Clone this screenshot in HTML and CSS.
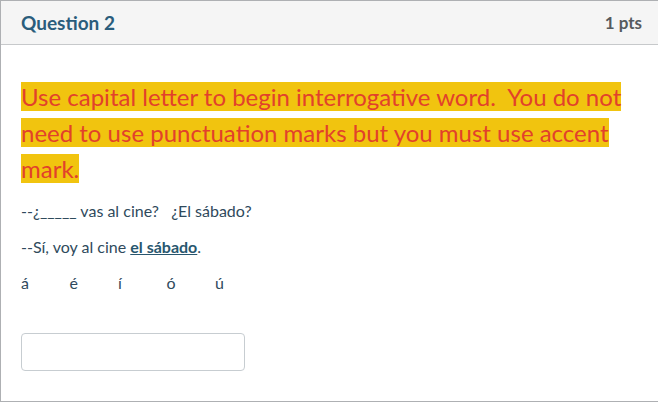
FILE: index.html
```html
<!DOCTYPE html>
<html>
<head>
<meta charset="utf-8">
<link rel="stylesheet" href="styles.css">
</head>
<body>
<div class="question">
  <div class="header">
    <span class="title">Question 2</span>
    <span class="pts">1 pts</span>
  </div>
  <div class="content">
    <p class="instr"><span class="hl">Use capital letter to begin interrogative word.&nbsp; You do not need to use punctuation marks but you must use accent mark.</span></p>
    <p class="line">--¿_____ vas al cine?&nbsp;&nbsp; ¿El sábado?</p>
    <p class="line">--Sí, voy al cine <strong class="u">el sábado</strong>.</p>
    <p class="line accents"><span>á</span><span>é</span><span>í</span><span>ó</span><span>ú</span></p>
    <div class="answer"><input type="text" class="field"></div>
  </div>
</div>
</body>
</html>
```

FILE: styles.css
```css
html, body {
  margin: 0;
  padding: 0;
  background: #fff;
}
body {
  font-family: Lato, "Helvetica Neue", Arial, sans-serif;
  color: #2d3b45;
}
.question {
  border: 1px solid #aeb0b3;
  border-right: none;
  height: 400px;
  box-sizing: content-box;
}
.header {
  height: 43px;
  background: #f5f5f5;
  border-bottom: 1px solid #c7c9cb;
  display: flex;
  align-items: center;
  justify-content: space-between;
  padding: 0 16px 0 20px;
}
.title {
  font-size: 19px;
  font-weight: 700;
  color: #2a5d7c;
}
.pts {
  font-size: 17px;
  font-weight: 700;
  color: #555a5e;
}
.content {
  padding: 34px 16px 0 20px;
}
.instr {
  margin: 0 0 14px 0;
  font-size: 24px;
  line-height: 36px;
  color: #e2412b;
}
.hl {
  background: #f1c40f;
}
.line {
  margin: 0 0 16px 0;
  font-size: 16px;
  line-height: 20px;
  color: #2f4a5c;
}
.u {
  text-decoration: underline;
  color: #28566e;
}
.accents span {
  display: inline-block;
  width: 48.5px;
}
.answer {
  margin-top: 40px;
}
.field {
  width: 224px;
  height: 38px;
  box-sizing: border-box;
  border: 1px solid #c7cdd1;
  border-radius: 4px;
  margin: 0;
  padding: 0 8px;
}
```
